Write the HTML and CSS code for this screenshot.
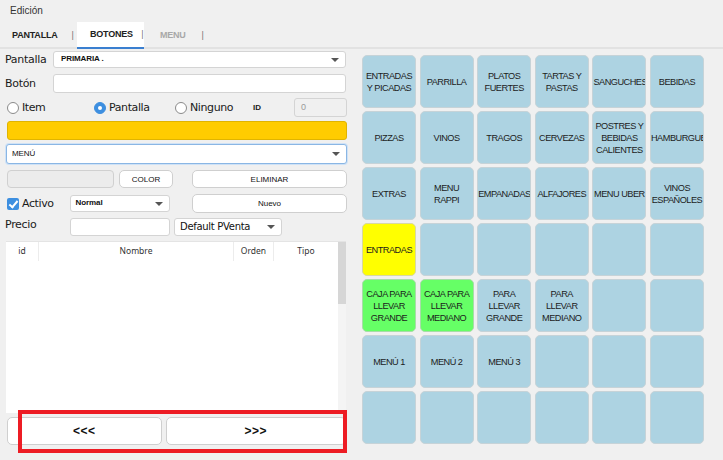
FILE: index.html
```html
<!DOCTYPE html>
<html lang="es">
<head>
    <meta charset="UTF-8">
    <title>Edición</title>
    <link rel="stylesheet" href="styles.css">
</head>
<body>
    <div class="titlebar">Edición</div>

    <div class="tabs">
        <span class="tab">PANTALLA</span>
        <span class="sep">|</span>
        <span class="tab active">BOTONES <span class="sep-in">|</span></span>
        <span class="tab muted">MENU</span>
        <span class="sep">|</span>
    </div>

    <div class="main">
        <!-- Left: editor form -->
        <div class="editor">
            <div class="row r-pantalla">
                <label class="lbl">Pantalla</label>
                <div class="select wide">PRIMARIA .<span class="arrow"></span></div>
            </div>
            <div class="row r-boton">
                <label class="lbl">Botón</label>
                <div class="input wide"></div>
            </div>
            <div class="row r-radios">
                <span class="radio"></span><span class="rlabel r-item">Item</span>
                <span class="radio checked"></span><span class="rlabel r-pant">Pantalla</span>
                <span class="radio"></span><span class="rlabel r-ning">Ninguno</span>
                <span class="id-lbl">ID</span>
                <div class="input id-box">0</div>
            </div>
            <div class="row colorbar"></div>
            <div class="row r-menu">
                <div class="select focus">MENÚ<span class="arrow"></span></div>
            </div>
            <div class="row r-color">
                <div class="input disabled color-preview"></div>
                <button class="btn btn-color">COLOR</button>
                <button class="btn btn-side">ELIMINAR</button>
            </div>
            <div class="row r-activo">
                <span class="check"></span><span class="rlabel">Activo</span>
                <div class="select small normal">Normal<span class="arrow"></span></div>
                <button class="btn btn-side">Nuevo</button>
            </div>
            <div class="row r-precio">
                <label class="lbl lbl-precio">Precio</label>
                <div class="input precio"></div>
                <div class="select pventa">Default PVenta<span class="arrow"></span></div>
            </div>

            <div class="table">
                <div class="thead">
                    <div class="th c-id">id</div>
                    <div class="th c-nombre">Nombre</div>
                    <div class="th c-orden">Orden</div>
                    <div class="th c-tipo">Tipo</div>
                </div>
                <div class="scrollbar"><div class="thumb"></div></div>
            </div>

            <div class="pager">
                <button class="btn pg pg-prev">&lt;&lt;&lt;</button>
                <button class="btn pg pg-next">&gt;&gt;&gt;</button>
                <div class="highlight"></div>
            </div>
        </div>

        <!-- Right: button grid -->
        <div class="grid">
            <div class="tile">ENTRADAS Y PICADAS</div>
            <div class="tile">PARRILLA</div>
            <div class="tile">PLATOS FUERTES</div>
            <div class="tile">TARTAS Y PASTAS</div>
            <div class="tile">SANGUCHES</div>
            <div class="tile">BEBIDAS</div>

            <div class="tile">PIZZAS</div>
            <div class="tile">VINOS</div>
            <div class="tile">TRAGOS</div>
            <div class="tile">CERVEZAS</div>
            <div class="tile">POSTRES Y BEBIDAS CALIENTES</div>
            <div class="tile">HAMBURGUESAS</div>

            <div class="tile">EXTRAS</div>
            <div class="tile">MENU RAPPI</div>
            <div class="tile">EMPANADAS</div>
            <div class="tile">ALFAJORES</div>
            <div class="tile">MENU UBER</div>
            <div class="tile">VINOS ESPAÑOLES</div>

            <div class="tile yellow">ENTRADAS</div>
            <div class="tile"></div>
            <div class="tile"></div>
            <div class="tile"></div>
            <div class="tile"></div>
            <div class="tile"></div>

            <div class="tile green">CAJA PARA LLEVAR GRANDE</div>
            <div class="tile green">CAJA PARA LLEVAR MEDIANO</div>
            <div class="tile">PARA LLEVAR GRANDE</div>
            <div class="tile">PARA LLEVAR MEDIANO</div>
            <div class="tile"></div>
            <div class="tile"></div>

            <div class="tile">MENÚ 1</div>
            <div class="tile">MENÚ 2</div>
            <div class="tile">MENÚ 3</div>
            <div class="tile"></div>
            <div class="tile"></div>
            <div class="tile"></div>

            <div class="tile"></div>
            <div class="tile"></div>
            <div class="tile"></div>
            <div class="tile"></div>
            <div class="tile"></div>
            <div class="tile"></div>
        </div>
    </div>
</body>
</html>
```

FILE: styles.css
```css
body {
    margin: 0;
    padding: 0;
    width: 723px;
    height: 460px;
    overflow: hidden;
    background: #f0f0f0;
    font-family: 'Liberation Sans', Arial, sans-serif;
    color: #1a1a1a;
}

.titlebar {
    height: 22px;
    padding-left: 10px;
    font-size: 10px;
    line-height: 21px;
    color: #333333;
}

/* tabs */
.tabs {
    display: flex;
    align-items: stretch;
    height: 25px;
    border-bottom: 2px solid #e2e2e2;
    padding-left: 12px;
    font-size: 9px;
    font-weight: bold;
}

.tab {
    line-height: 26px;
    color: #222222;
    letter-spacing: -0.2px;
}

.tab.active {
    width: 67px;
    margin-left: -2px;
    padding-left: 13px;
    box-sizing: border-box;
    background: #ffffff;
    border-bottom: 2px solid #3a7fd0;
    line-height: 25px;
    margin-bottom: -2px;
}

.tab.muted {
    color: #a8a8a8;
    margin-left: 16px;
}

.sep {
    line-height: 27px;
    color: #777777;
    font-weight: normal;
    margin: 0 5px 0 14px;
}

.tabs .sep:last-child {
    margin-left: 16px;
}

.sep-in {
    color: #777777;
    font-weight: normal;
    margin-left: 6px;
}

.main {
    display: flex;
}

/* left form */
.editor {
    position: relative;
    width: 355px;
    height: 411px;
    padding-left: 6px;
    box-sizing: border-box;
}

.row {
    display: flex;
    align-items: center;
    width: 341px;
}

.lbl {
    width: 48px;
    font-family: 'DejaVu Sans', sans-serif;
    font-size: 11px;
    letter-spacing: -0.3px;
    color: #1a1a1a;
    margin-left: -1px;
}

.input, .select {
    position: relative;
    box-sizing: border-box;
    background: #ffffff;
    border: 1px solid #d4d4d4;
    border-radius: 3px;
    font-size: 8px;
    padding-left: 7px;
    color: #111111;
}

.select {
    font-weight: bold;
    letter-spacing: -0.1px;
}

.arrow {
    position: absolute;
    right: 6px;
    top: 50%;
    margin-top: -2px;
    border-left: 4px solid transparent;
    border-right: 4px solid transparent;
    border-top: 4px solid #555555;
}

.wide {
    width: 293px;
}

.r-pantalla {
    margin-top: 2px;
    height: 17px;
}

.r-pantalla .select {
    height: 17px;
    line-height: 14px;
}

.r-boton {
    margin-top: 6px;
    height: 19px;
}

.r-boton .input {
    height: 19px;
}

.r-radios {
    margin-top: 5px;
    height: 19px;
}

.radio {
    width: 10px;
    height: 10px;
    border: 1px solid #8a8a8a;
    border-radius: 50%;
    background: #ffffff;
    margin-left: 1px;
    position: relative;
}

.radio.checked {
    background: #3d8fe0;
    border-color: #3d8fe0;
}

.radio.checked::after {
    content: "";
    position: absolute;
    left: 3px;
    top: 3px;
    width: 4px;
    height: 4px;
    border-radius: 50%;
    background: #ffffff;
}

.rlabel {
    font-family: 'DejaVu Sans', sans-serif;
    font-size: 11px;
    letter-spacing: -0.4px;
    margin-left: 3px;
}

.r-item {
    width: 71px;
}

.r-pant {
    width: 65px;
}

.r-ning {
    width: 63px;
}

.id-lbl {
    font-size: 8px;
    font-weight: bold;
    width: 41px;
}

.id-box {
    width: 53px;
    height: 19px;
    line-height: 17px;
    background: #f0f0f0;
    color: #9a9a9a;
    font-size: 9px;
    padding-left: 6px;
}

.colorbar {
    margin-top: 4px;
    height: 19px;
    background: #ffcc00;
    border: 1px solid #e0b400;
    border-radius: 3px;
    box-sizing: border-box;
    margin-left: 1px;
    width: 340px;
}

.r-menu {
    margin-top: 4px;
    height: 20px;
}

.select.focus {
    width: 341px;
    height: 20px;
    line-height: 17px;
    border: 1px solid #8ab6e4;
    box-shadow: 0 0 0 1px #cfe2f6;
    font-weight: normal;
    font-size: 8px;
    padding-left: 5px;
}

.r-color {
    margin-top: 6px;
    height: 18px;
}

.input.disabled {
    background: #ececec;
    border-color: #d0d0d0;
}

.color-preview {
    margin-left: 1px;
    width: 107px;
    height: 18px;
    border-radius: 4px;
}

.btn {
    box-sizing: border-box;
    background: #ffffff;
    border: 1px solid #cfcfcf;
    border-radius: 5px;
    font-family: 'Liberation Sans', Arial, sans-serif;
    font-size: 8px;
    color: #111111;
    padding: 0;
}

.btn-color {
    margin-left: 5px;
    width: 54px;
    height: 18px;
}

.btn-side {
    margin-left: auto;
    width: 155px;
    height: 18px;
}

.r-activo {
    margin-top: 6px;
    height: 19px;
}

.r-activo .btn-side {
    height: 19px;
}

.check {
    position: relative;
    width: 12px;
    height: 12px;
    margin-left: 1px;
    background: #3d8fe0;
    border-radius: 2px;
}

.check::after {
    content: "";
    position: absolute;
    left: 4px;
    top: 1px;
    width: 3px;
    height: 7px;
    border: solid #ffffff;
    border-width: 0 2px 2px 0;
    transform: rotate(40deg);
}

.select.normal {
    margin-left: 16px;
    width: 100px;
    height: 17px;
    line-height: 14px;
    font-weight: bold;
    padding-left: 5px;
}

.r-precio {
    margin-top: 5px;
    height: 18px;
}

.lbl-precio {
    width: 65px;
    margin-top: -6px;
}

.precio {
    width: 100px;
    height: 18px;
}

.pventa {
    margin-left: 4px;
    width: 108px;
    height: 18px;
    line-height: 16px;
    font-family: 'DejaVu Sans', sans-serif;
    font-weight: normal;
    font-size: 10px;
    letter-spacing: -0.3px;
    padding-left: 5px;
}

/* table */
.table {
    position: relative;
    margin-top: 5px;
    width: 340px;
    height: 172px;
    background: #ffffff;
    border-top: 1px solid #e4e4e4;
    box-sizing: border-box;
}

.thead {
    display: flex;
    height: 19px;
    font-family: 'Noto Sans', sans-serif;
    font-size: 8.5px;
    color: #333333;
}

.th {
    text-align: center;
    line-height: 18px;
    border-right: 1px solid #ececec;
    box-sizing: border-box;
}

.c-id { width: 33px; }
.c-nombre { width: 195px; }
.c-orden { width: 40px; }
.c-tipo { width: 64px; border-right: none; }

.scrollbar {
    position: absolute;
    right: 0;
    top: 0;
    width: 8px;
    height: 100%;
    background: #f4f4f4;
}

.thumb {
    height: 62px;
    background: #d6d6d6;
}

/* pager */
.pager {
    position: relative;
    display: flex;
    gap: 4px;
    margin-top: 4px;
    width: 340px;
}

.pg {
    height: 28px;
    font-size: 12px;
    font-weight: bold;
    letter-spacing: 0.5px;
    border-radius: 5px;
}

.pg-prev {
    margin-left: 1px;
    width: 155px;
}

.pg-next {
    width: 181px;
}

.highlight {
    position: absolute;
    left: 12px;
    top: -7px;
    width: 329px;
    height: 43px;
    border: 4px solid #ed1c24;
    box-sizing: border-box;
}

/* grid */
.grid {
    display: grid;
    grid-template-columns: repeat(6, 54px);
    grid-auto-rows: 53px;
    column-gap: 3.6px;
    row-gap: 3px;
    padding: 6px 0 0 7px;
}

.tile {
    display: flex;
    align-items: center;
    justify-content: safe center;
    overflow: hidden;
    box-sizing: border-box;
    background: #add3e2;
    border: 1px solid #c6d3d8;
    border-radius: 5px;
    text-align: center;
    font-family: 'Liberation Sans', Arial, sans-serif;
    font-size: 9.2px;
    letter-spacing: -0.5px;
    line-height: 12px;
    color: #1c1c1c;
}

.tile.yellow {
    background: #ffff00;
    border-color: #d8d8a0;
}

.tile.green {
    background: #66ff66;
    border-color: #a8dca8;
}
```
